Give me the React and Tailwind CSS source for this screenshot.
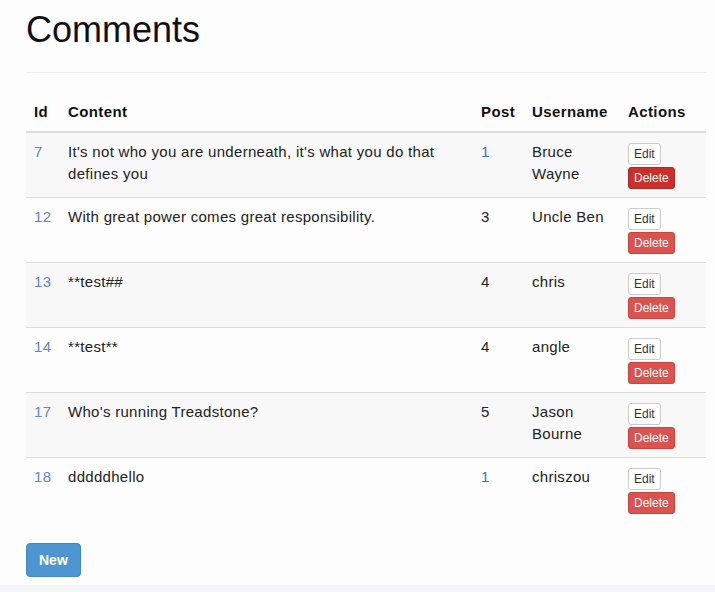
import React from 'react';

const comments = [
    { id: 7, content: "It's not who you are underneath, it's what you do that defines you", post: 1, postLink: true, username: 'Bruce Wayne', active: true },
    { id: 12, content: 'With great power comes great responsibility.', post: 3, username: 'Uncle Ben' },
    { id: 13, content: '**test##', post: 4, username: 'chris' },
    { id: 14, content: '**test**', post: 4, username: 'angle' },
    { id: 17, content: "Who's running Treadstone?", post: 5, username: 'Jason Bourne' },
    { id: 18, content: 'dddddhello', post: 1, postLink: true, username: 'chriszou' },
];

const App = () => {
    return (
        <div className="w-[715px] h-[592px] bg-[#f4f5f6] font-['Liberation_Sans',Arial,sans-serif] text-[15px] leading-[22px] text-[#333]">
            <div className="h-[585px] bg-[#fdfdfd] pl-[26px]">
                <div className="w-[680px]">
                    {/* Page header */}
                    <div className="pt-[10px] pb-[22px] border-b border-[#eee]">
                        <h1 className="text-[36px] leading-[40px] text-[#111]">Comments</h1>
                    </div>

                    {/* Table */}
                    <table className="mt-[20px] w-full table-fixed border-collapse">
                        <colgroup>
                            <col className="w-[34px]" />
                            <col className="w-[413px]" />
                            <col className="w-[51px]" />
                            <col className="w-[96px]" />
                            <col className="w-[86px]" />
                        </colgroup>
                        <thead>
                            <tr className="text-left text-[#111] tracking-[0.4px]">
                                <th className="p-2 font-bold border-b-2 border-[#ddd]">Id</th>
                                <th className="p-2 font-bold border-b-2 border-[#ddd]">Content</th>
                                <th className="p-2 font-bold border-b-2 border-[#ddd]">Post</th>
                                <th className="p-2 font-bold border-b-2 border-[#ddd]">Username</th>
                                <th className="p-2 font-bold border-b-2 border-[#ddd]">Actions</th>
                            </tr>
                        </thead>
                        <tbody className="tracking-[0.3px]">
                            {comments.map((c, i) => (
                                <tr key={c.id} className={i % 2 === 0 ? 'bg-[#f8f8f8]' : ''}>
                                    <td className={`h-[65px] p-2 align-top text-[#5e83d6] ${i > 0 ? 'border-t border-[#ddd]' : ''}`}>{c.id}</td>
                                    <td className={`p-2 align-top text-[#222] ${i > 0 ? 'border-t border-[#ddd]' : ''}`}>{c.content}</td>
                                    <td className={`p-2 align-top ${c.postLink ? 'text-[#2f7bbf]' : 'text-[#222]'} ${i > 0 ? 'border-t border-[#ddd]' : ''}`}>{c.post}</td>
                                    <td className={`p-2 align-top text-[#222] ${i > 0 ? 'border-t border-[#ddd]' : ''}`}>{c.username}</td>
                                    <td className={`p-2 align-top tracking-normal ${i > 0 ? 'border-t border-[#ddd]' : ''}`}>
                                        <div className="flex flex-col items-start gap-[2px] pt-[2px]">
                                            <button className="bg-white border border-[#ccc] rounded-[3px] px-[5px] py-px text-[12px] leading-[18px] text-[#333]">
                                                Edit
                                            </button>
                                            <button className={`${c.active ? 'bg-[#c9302c] border-[#ac2925]' : 'bg-[#d9534f] border-[#d43f3a]'} border rounded-[3px] px-[5px] py-px text-[12px] leading-[18px] text-white`}>
                                                Delete
                                            </button>
                                        </div>
                                    </td>
                                </tr>
                            ))}
                        </tbody>
                    </table>

                    {/* New button */}
                    <button className="mt-[20px] bg-[#4d96d1] border border-[#4089c6] rounded-[4px] px-3 py-[6px] text-[14px] leading-[20px] font-bold text-white">
                        New
                    </button>
                </div>
            </div>
        </div>
    );
};

export default App;
